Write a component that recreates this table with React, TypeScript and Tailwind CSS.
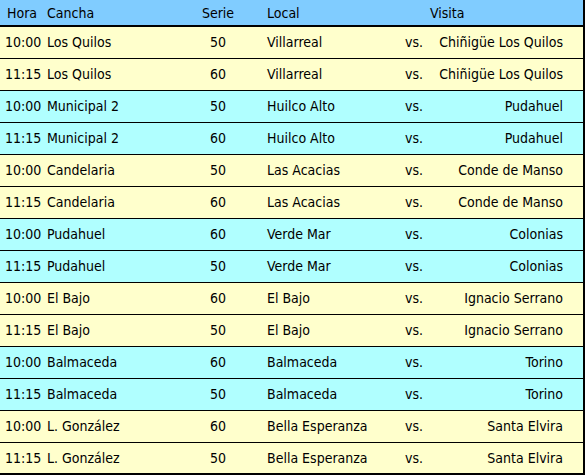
import React from "react";

type Row = { h: string; c: string; s: string; l: string; v: string; bg: "y" | "c" };

const rows: Row[] = [
  { h: "10:00", c: "Los Quilos", s: "50", l: "Villarreal", v: "Chiñigüe Los Quilos", bg: "y" },
  { h: "11:15", c: "Los Quilos", s: "60", l: "Villarreal", v: "Chiñigüe Los Quilos", bg: "y" },
  { h: "10:00", c: "Municipal 2", s: "50", l: "Huilco Alto", v: "Pudahuel", bg: "c" },
  { h: "11:15", c: "Municipal 2", s: "60", l: "Huilco Alto", v: "Pudahuel", bg: "c" },
  { h: "10:00", c: "Candelaria", s: "50", l: "Las Acacias", v: "Conde de Manso", bg: "y" },
  { h: "11:15", c: "Candelaria", s: "60", l: "Las Acacias", v: "Conde de Manso", bg: "y" },
  { h: "10:00", c: "Pudahuel", s: "60", l: "Verde Mar", v: "Colonias", bg: "c" },
  { h: "11:15", c: "Pudahuel", s: "50", l: "Verde Mar", v: "Colonias", bg: "c" },
  { h: "10:00", c: "El Bajo", s: "60", l: "El Bajo", v: "Ignacio Serrano", bg: "y" },
  { h: "11:15", c: "El Bajo", s: "50", l: "El Bajo", v: "Ignacio Serrano", bg: "y" },
  { h: "10:00", c: "Balmaceda", s: "60", l: "Balmaceda", v: "Torino", bg: "c" },
  { h: "11:15", c: "Balmaceda", s: "50", l: "Balmaceda", v: "Torino", bg: "c" },
  { h: "10:00", c: "L. González", s: "60", l: "Bella Esperanza", v: "Santa Elvira", bg: "y" },
  { h: "11:15", c: "L. González", s: "50", l: "Bella Esperanza", v: "Santa Elvira", bg: "y" },
];

const grid = "grid grid-cols-[42px_148px_56px_154px_30px_133px_20px] items-center";

export default function App() {
  return (
    <div
      className="w-[585px] h-[475px] bg-white text-[14px] text-black"
      style={{ fontFamily: '"DejaVu Sans Condensed", "DejaVu Sans", Verdana, sans-serif' }}
    >
      <div className="w-[585px] border-r-2 border-b-2 border-black">
        <div className={`${grid} h-[27px] pt-[1px] bg-[#80ccff] border-b-2 border-black`}>
          <div className="pl-[7px]">Hora</div>
          <div className="pl-[5px]">Cancha</div>
          <div className="text-center">Serie</div>
          <div className="pl-[21px]">Local</div>
          <div></div>
          <div className="pl-0">Visita</div>
          <div></div>
        </div>
        {rows.map((r, i) => (
          <div
            key={i}
            className={`${grid} ${i === rows.length - 1 ? "h-[30px]" : "h-[32px] border-b border-black"} ${
              r.bg === "y" ? "bg-[#ffffcc]" : "bg-[#b0ffff]"
            }`}
          >
            <div className="pl-[5px]">{r.h}</div>
            <div className="pl-[5px]">{r.c}</div>
            <div className="text-center">{r.s}</div>
            <div className="pl-[21px]">{r.l}</div>
            <div className="pl-[5px]">vs.</div>
            <div className="text-right">{r.v}</div>
            <div></div>
          </div>
        ))}
      </div>
    </div>
  );
}
